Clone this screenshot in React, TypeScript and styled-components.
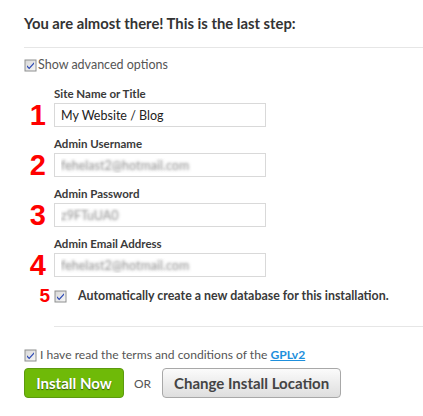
import React from "react";
import styled, { createGlobalStyle } from "styled-components";

const Global = createGlobalStyle`
  html, body { margin: 0; padding: 0; background: #fff; }
  body { font-family: Lato, "Open Sans", Arial, sans-serif; color: #444; }
`;

const Page = styled.div`
  padding: 13px 0 0 24px;
`;

const Heading = styled.h2`
  margin: 0;
  font: 700 14.8px/20px Lato, Arial, sans-serif;
  color: #333;
`;

const Divider = styled.div<{ $top: number; $inset?: number }>`
  height: 1px;
  background: #e6e6e6;
  margin-top: ${(p) => p.$top}px;
  margin-left: ${(p) => p.$inset ?? 0}px;
`;

const CheckRow = styled.label<{ $top: number; $gap: number; $size: number }>`
  display: flex;
  align-items: center;
  gap: ${(p) => p.$gap}px;
  margin-top: ${(p) => p.$top}px;
  height: 14px;
  font: 400 ${(p) => p.$size}px/14px Lato, Arial, sans-serif;
  color: #555;
`;

const BoxWrap = styled.span`
  display: inline-flex;
  width: 13px;
  height: 13px;
  flex: none;
`;

const Check = () => (
  <BoxWrap>
    <svg width="13" height="13" viewBox="0 0 13 13">
      <defs>
        <linearGradient id="cbg" x1="0" y1="0" x2="1" y2="1">
          <stop offset="0" stopColor="#d8d8d8" />
          <stop offset="1" stopColor="#f6f6f6" />
        </linearGradient>
      </defs>
      <rect x="0.5" y="0.5" width="12" height="12" fill="#8e8f8f" />
      <rect x="1.5" y="1.5" width="10" height="10" fill="url(#cbg)" />
      <path d="M3 6.2 L5.2 8.6 L10 3.2 L10 5 L5.2 10.3 L3 8 Z" fill="#2b48b4" />
    </svg>
  </BoxWrap>
);

const Fields = styled.div`
  margin-top: 15px;
  display: grid;
  grid-template-columns: 30px 212px;
`;

const FieldLabel = styled.div<{ $first?: boolean }>`
  grid-column: 2;
  font: 700 11.5px/14px Lato, Arial, sans-serif;
  color: #3a3a3a;
  margin-top: ${(p) => (p.$first ? 0 : 10)}px;
  margin-bottom: 2px;
`;

const Num = styled.div`
  grid-column: 1;
  display: flex;
  align-items: center;
  justify-content: flex-end;
  padding-right: 8px;
  font: 700 29px/24px "Liberation Sans", Arial, sans-serif;
  color: #f00;
`;

const Input = styled.input<{ $blur?: boolean }>`
  grid-column: 2;
  box-sizing: border-box;
  width: 212px;
  height: 24px;
  margin: 0;
  border: 1px solid #d9d9d9;
  padding: 0 6px;
  font: 400 12.5px Lato, Arial, sans-serif;
  color: ${(p) => (p.$blur ? "transparent" : "#222")};
  text-shadow: ${(p) => (p.$blur ? "0 0 3px rgba(90,90,90,0.7)" : "none")};
  background: #fff;
  outline: none;
`;

const DbRow = styled.label`
  display: flex;
  align-items: center;
  margin-top: 12px;
  height: 14px;
`;

const SmallNum = styled.span`
  width: 30px;
  box-sizing: border-box;
  text-align: right;
  padding-right: 4px;
  font: 700 19px/14px "Liberation Sans", Arial, sans-serif;
  color: #f00;
`;

const DbText = styled.span`
  margin-left: 11px;
  font: 700 12.4px/14px Lato, Arial, sans-serif;
  color: #3a3a3a;
`;

const Link = styled.a`
  color: #1e8fdc;
  font-weight: 700;
  text-decoration: underline;
`;

const Actions = styled.div`
  display: flex;
  align-items: center;
  margin-top: 6px;
`;

const InstallBtn = styled.button`
  box-sizing: border-box;
  width: 100px;
  height: 30px;
  border: 1px solid #5c9a0f;
  border-radius: 4px;
  background: #6fba08;
  color: #fff;
  font: 700 15px Lato, Arial, sans-serif;
  text-shadow: 0 1px 1px rgba(0,0,0,0.55);
  padding: 0;
`;

const Or = styled.span`
  margin: 0 11px 0 10px;
  font: 400 12px Lato, Arial, sans-serif;
  color: #555;
`;

const ChangeBtn = styled.button`
  box-sizing: border-box;
  width: 179px;
  height: 30px;
  border: 1px solid #a8a8a8;
  border-radius: 4px;
  background: linear-gradient(#fbfbfb, #dedede);
  color: #444;
  font: 700 15px Lato, Arial, sans-serif;
  padding: 0;
`;

export default function App() {
  return (
    <Page>
      <Global />
      <Heading>You are almost there! This is the last step:</Heading>
      <Divider $top={14} />
      <CheckRow $top={10} $gap={1} $size={12.5}>
        <Check />
        Show advanced options
      </CheckRow>
      <Fields>
        <FieldLabel $first>Site Name or Title</FieldLabel>
        <Num>1</Num>
        <Input readOnly value="My Website / Blog" />
        <FieldLabel>Admin Username</FieldLabel>
        <Num>2</Num>
        <Input readOnly $blur value="fehelast2@hotmail.com" />
        <FieldLabel>Admin Password</FieldLabel>
        <Num>3</Num>
        <Input readOnly $blur value="z9FTuUA0" />
        <FieldLabel>Admin Email Address</FieldLabel>
        <Num>4</Num>
        <Input readOnly $blur value="fehelast2@hotmail.com" />
      </Fields>
      <DbRow>
        <SmallNum>5</SmallNum>
        <Check />
        <DbText>Automatically create a new database for this installation.</DbText>
      </DbRow>
      <Divider $top={23} $inset={30} />
      <CheckRow $top={21} $gap={3} $size={12.1}>
        <Check />
        <span>
          I have read the terms and conditions of the <Link href="#">GPLv2</Link>
        </span>
      </CheckRow>
      <Actions>
        <InstallBtn>Install Now</InstallBtn>
        <Or>OR</Or>
        <ChangeBtn>Change Install Location</ChangeBtn>
      </Actions>
    </Page>
  );
}
